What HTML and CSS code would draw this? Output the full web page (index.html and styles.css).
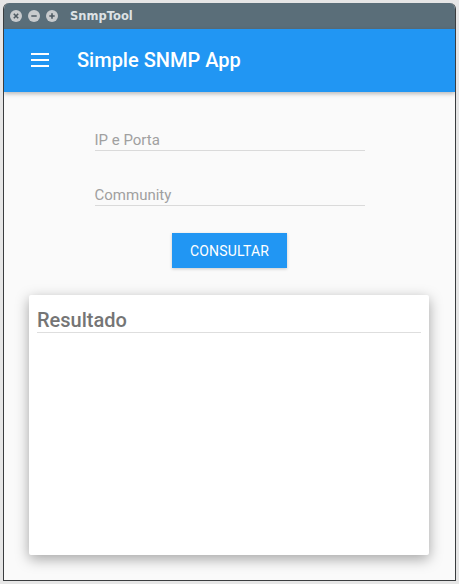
FILE: index.html
```html
<!DOCTYPE html>
<html>
<head>
<meta charset="utf-8">
<link rel="stylesheet" href="styles.css">
</head>
<body>
<div class="window">
  <div class="titlebar">
    <div class="controls">
      <span class="ctl"><svg width="12" height="12" viewBox="0 0 12 12"><path d="M3.8 3.8 L8.2 8.2 M8.2 3.8 L3.8 8.2" stroke="#4e5a62" stroke-width="1.6"/></svg></span>
      <span class="ctl"><svg width="12" height="12" viewBox="0 0 12 12"><path d="M3.3 6 H8.7" stroke="#4e5a62" stroke-width="1.6"/></svg></span>
      <span class="ctl"><svg width="12" height="12" viewBox="0 0 12 12"><path d="M3.3 6 H8.7 M6 3.3 V8.7" stroke="#4e5a62" stroke-width="1.6"/></svg></span>
    </div>
    <span class="wtitle">SnmpTool</span>
  </div>
  <div class="app">
    <header class="appbar">
      <svg class="menu" width="18" height="14" viewBox="0 0 18 14"><rect x="0" y="0" width="18" height="2" fill="#fff"/><rect x="0" y="6" width="18" height="2" fill="#fff"/><rect x="0" y="12" width="18" height="2" fill="#fff"/></svg>
      <span class="apptitle">Simple SNMP App</span>
    </header>
    <main class="content">
      <div class="form">
        <div class="field">IP e Porta</div>
        <div class="field">Community</div>
        <button class="btn">CONSULTAR</button>
      </div>
      <section class="card">
        <h2 class="card-title">Resultado</h2>
      </section>
    </main>
  </div>
</div>
</body>
</html>
```
FILE: styles.css
```css
html, body { margin: 0; padding: 0; }
body {
  background: #e6e6e6;
  font-family: Roboto, "Noto Sans", sans-serif;
  padding: 3px 3px 0 3px;
  width: 459px;
  height: 584px;
  box-sizing: border-box;
}
.window {
  width: 453px;
  height: 578px;
  box-sizing: border-box;
  border: 1px solid #3a3d3f;
  border-top: none;
  border-radius: 6px 6px 0 0;
  overflow: hidden;
  display: flex;
  flex-direction: column;
  background: #fafafa;
}
.titlebar {
  height: 26px;
  background: #5a6e79;
  display: flex;
  align-items: center;
  flex-shrink: 0;
}
.controls {
  display: flex;
  gap: 6px;
  padding-left: 6px;
}
.ctl {
  width: 12px;
  height: 12px;
  border-radius: 50%;
  background: #c8cbcd;
  display: flex;
}
.wtitle {
  margin-left: 12px;
  color: #dde2e5;
  font-family: "DejaVu Sans", sans-serif;
  font-weight: bold;
  font-size: 11.5px;
}
.app {
  flex: 1;
  display: flex;
  flex-direction: column;
}
.appbar {
  height: 63px;
  background: #2196f3;
  display: flex;
  align-items: center;
  padding-left: 27px;
  box-shadow: 0 2px 4px rgba(0,0,0,0.25);
  flex-shrink: 0;
  position: relative;
}
.menu { margin-top: -1px; }
.apptitle {
  color: #fff;
  font-size: 20px;
  font-weight: 500;
  margin-left: 28px;
  margin-top: -2px;
}
.content {
  flex: 1;
  display: flex;
  flex-direction: column;
  align-items: center;
}
.form {
  width: 270px;
  display: flex;
  flex-direction: column;
  align-items: center;
  padding-top: 38px;
}
.field {
  align-self: stretch;
  color: #a0a0a0;
  font-size: 15px;
  height: 20px;
  line-height: 20px;
  border-bottom: 1px solid #dadada;
  margin-bottom: 34px;
}
.field + .field { margin-bottom: 27px; }
.btn {
  width: 115px;
  height: 35px;
  border: none;
  background: #2196f3;
  color: #fff;
  font-family: Roboto, sans-serif;
  font-size: 14px;
  letter-spacing: 0.2px;
  box-shadow: 0 1px 3px rgba(0,0,0,0.2);
  padding: 0;
}
.card {
  margin-top: 27px;
  margin-right: 1px;
  width: 400px;
  height: 260px;
  background: #fff;
  border-radius: 2px;
  box-shadow: 0 4px 14px rgba(0,0,0,0.35);
  box-sizing: border-box;
  padding: 0 8px;
}
.card-title {
  margin: 0;
  font-size: 20px;
  font-weight: 500;
  color: #757575;
  padding-top: 13px;
  height: 24px;
  line-height: 24px;
  border-bottom: 1px solid #dedede;
}
```
